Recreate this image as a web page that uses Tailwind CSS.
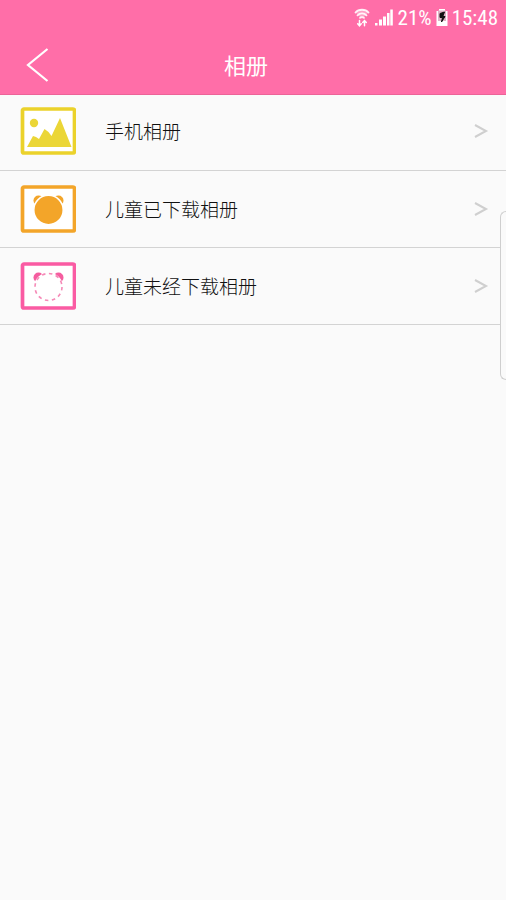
<!DOCTYPE html>
<html lang="zh-CN">
<head>
<meta charset="utf-8">
<meta name="viewport" content="width=device-width, initial-scale=1">
<title>相册</title>
<script src="https://cdn.jsdelivr.net/npm/@tailwindcss/browser@4"></script>
</head>
<body class="relative min-h-screen bg-[#fafafa] font-['Noto_Sans_CJK_SC',sans-serif] font-light text-[#111]">
<header class="border-b border-[#ec6398] bg-[#ff6ea8] text-white">
  <div class="flex h-9 items-center justify-end gap-1 pr-2 font-[Roboto_Condensed,Roboto,sans-serif] text-[21px] leading-9 font-normal">
    <svg class="h-5 w-4" viewBox="0 0 16 20" fill="none" stroke="currentColor" stroke-width="1.800" stroke-linecap="round" aria-label="Wi-Fi" role="img">
      <path d="M1.500 4.500C4.500 .8 11.500 .8 14.500 4.500M3.500 7.300C6 4.800 10 4.800 12.500 7.300M6 9.800C7 8.800 9 8.800 10 9.800" opacity=".9"/>
      <path d="M1.500 4.500L8 11l6.500-6.500C11.500 .8 4.500 .8 1.500 4.500z" fill="currentColor" fill-opacity=".35" stroke="none"/>
      <path d="M5.500 12.500v5M3.700 15.800l1.800 2 1.800-2M10.500 17.800v-5M8.700 14.500l1.800-2 1.800 2" stroke-width="1.500"/>
    </svg>
    <svg class="h-5 w-5" viewBox="0 0 20 20" fill="currentColor" aria-label="信号" role="img">
      <path d="M1 15h2.500v2.500H1zM5 11.500h3v6H5zM9 8.500h3v9H9zM13 5h2.500v12.500H13zM16.300 1.500h2.500v16h-2.500z"/>
    </svg>
    <span>21%</span>
    <svg class="h-5 w-3" viewBox="0 0 12 20" aria-label="正在充电" role="img">
      <path d="M3 1h6v2h2.500v15H.5V3H3z" fill="#fff"/>
      <path d="M2 2.500h8V13H2z" fill="#dfb3c6"/>
      <path d="M8.500 4L4 5.500v4h2.500L5.500 14 9 8.500H6.800z" fill="#111" stroke="#111"/>
    </svg>
    <time>15:48</time>
  </div>
  <div class="grid grid-cols-[76px_1fr_90px] items-center pb-1">
    <button type="button" aria-label="返回" class="flex h-[54px] items-center pt-1 pl-6">
      <svg class="h-9 w-7" viewBox="0 0 28 36" fill="none" stroke="currentColor" stroke-width="2.200"><path d="M23.500 2L4 18l19.500 16"/></svg>
    </button>
    <h1 class="pt-0.5 text-center text-[22px] leading-8 font-normal">相册</h1>
  </div>
</header>
<main>
  <ul>
    <li class="border-b border-[#d3d3d3]">
      <a href="#phone" class="flex h-[75px] items-center pr-4 pb-[3px] pl-5">
        <svg class="h-12 w-14 shrink-0" viewBox="0 0 56 48" fill="#ebd637" aria-hidden="true">
          <rect x="2.500" y="2" width="52" height="44" rx="1.500" fill="#fff" stroke="#ebd22b" stroke-width="3.700"/>
          <circle cx="14" cy="16" r="4.200"/>
          <path d="M7 40l6-11 3 1 3 2 5.500-10 4 3 3 4 8.500-18 11.500 29z"/>
        </svg>
        <span class="ml-[29px] flex-1 text-[19px] leading-7">手机相册</span>
        <svg class="h-4 w-4 shrink-0" viewBox="0 0 16 16" fill="none" stroke="#cfcfcf" stroke-width="2" aria-hidden="true"><path d="M1 2l11 6-11 6"/></svg>
      </a>
    </li>
    <li class="border-b border-[#d3d3d3]">
      <a href="#downloaded" class="flex h-[76px] items-center pr-4 pb-px pl-5">
        <svg class="h-12 w-14 shrink-0" viewBox="0 0 56 48" fill="#f3a529" aria-hidden="true">
          <rect x="2.500" y="2" width="52" height="44" rx="1.500" fill="#fff" stroke="#f3a529" stroke-width="3.700"/>
          <circle cx="18.500" cy="15.500" r="5"/>
          <circle cx="38.500" cy="15.500" r="5"/>
          <circle cx="28.500" cy="25" r="14.700" stroke="#fff" stroke-width="1.500"/>
        </svg>
        <span class="ml-[29px] flex-1 text-[19px] leading-7">儿童已下载相册</span>
        <svg class="h-4 w-4 shrink-0" viewBox="0 0 16 16" fill="none" stroke="#cfcfcf" stroke-width="2" aria-hidden="true"><path d="M1 2l11 6-11 6"/></svg>
      </a>
    </li>
    <li class="border-b border-[#d3d3d3]">
      <a href="#pending" class="flex h-[76px] items-center pr-4 pl-5">
        <svg class="h-12 w-14 shrink-0" viewBox="0 0 56 48" fill="#f55d9f" aria-hidden="true">
          <rect x="2.500" y="2" width="52" height="44" rx="1.500" fill="#fff" stroke="#fa5ba3" stroke-width="3.700"/>
          <circle cx="18.500" cy="15.500" r="5"/>
          <circle cx="38.500" cy="15.500" r="5"/>
          <circle cx="28.500" cy="25" r="14.500" fill="#fff"/>
          <circle cx="28.500" cy="25" r="13.500" fill="none" stroke="#f58ab7" stroke-width="1.600" stroke-dasharray="3.500 3.570"/>
        </svg>
        <span class="ml-[29px] flex-1 text-[19px] leading-7">儿童未经下载相册</span>
        <svg class="h-4 w-4 shrink-0" viewBox="0 0 16 16" fill="none" stroke="#cfcfcf" stroke-width="2" aria-hidden="true"><path d="M1 2l11 6-11 6"/></svg>
      </a>
    </li>
  </ul>
</main>
<!-- Edge panel handle -->
<div class="absolute top-[211px] right-0 h-[169px] w-[6px] rounded-l-md border border-r-0 border-[#cfcfcf] bg-[#fafafa]"></div>
</body>
</html>
